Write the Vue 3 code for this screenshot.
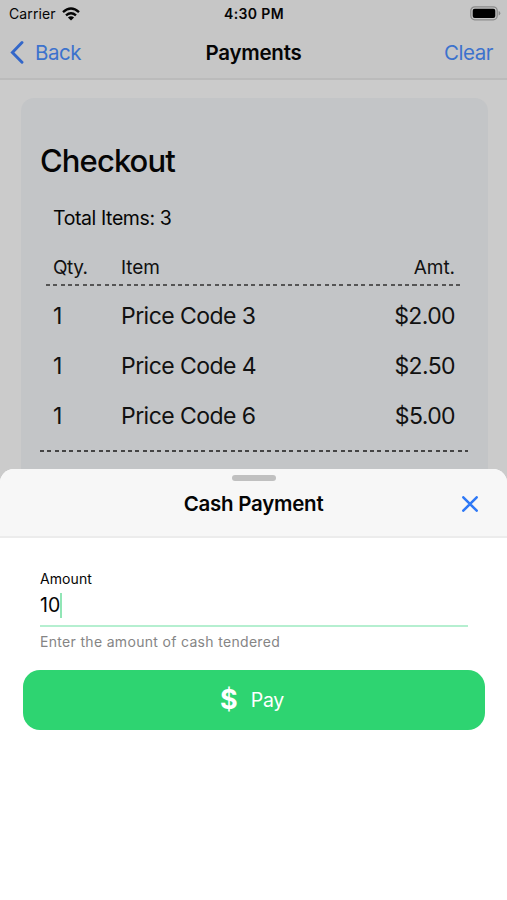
<script setup>
const items = [
  { qty: 1, name: 'Price Code 3', amount: '$2.00' },
  { qty: 1, name: 'Price Code 4', amount: '$2.50' },
  { qty: 1, name: 'Price Code 6', amount: '$5.00' },
]
const cash = '10'
</script>

<template>
  <div class="screen">
    <div class="page">
      <header class="top">
        <div class="status">
          <div class="carrier">
            <span class="carrier-name">Carrier</span>
            <svg class="wifi" viewBox="0 0 18 14" width="18" height="14">
              <path d="M1 5.1Q9-1.9 17 5.1M4 8.4Q9 4.1 14 8.4" fill="none" stroke="#050505" stroke-width="2.4" />
              <path d="M5.9 10.5Q9 8 12.1 10.5L9 13.6Z" fill="#050505" />
            </svg>
          </div>
          <span class="time">4:30 PM</span>
          <svg class="battery" viewBox="0 0 31 15" width="31" height="15">
            <rect x="0.8" y="0.8" width="26.4" height="13" rx="4" fill="none" stroke="#8b8b8b" stroke-width="1.3" />
            <rect x="2.7" y="2.7" width="22.6" height="9.2" rx="2" fill="#000" />
            <path d="M28.6 5Q30.3 5.6 30.3 7.3T28.6 9.6Z" fill="#8b8b8b" />
          </svg>
        </div>
        <nav class="nav">
          <a class="back">
            <svg viewBox="0 0 14 23" width="14" height="23">
              <path d="M12 1.6L2.4 11.4L12 21.2" fill="none" stroke="#3367c9" stroke-width="2.9" stroke-linecap="round" stroke-linejoin="miter" />
            </svg>
            <span>Back</span>
          </a>
          <span class="title">Payments</span>
          <a class="clear">Clear</a>
        </nav>
      </header>
      <main class="card">
        <h1>Checkout</h1>
        <p class="total">Total Items: 3</p>
        <div class="row head">
          <span class="qty">Qty.</span><span>Item</span><span class="amt">Amt.</span>
        </div>
        <div class="dash inset"></div>
        <div class="rows">
          <div v-for="item in items" :key="item.name" class="row">
            <span>{{ item.qty }}</span><span>{{ item.name }}</span><span class="amt">{{ item.amount }}</span>
          </div>
        </div>
        <div class="dash"></div>
      </main>
    </div>
    <section class="sheet">
      <header class="sheet-head">
        <div class="handle"></div>
        <div class="sheet-bar">
          <h2>Cash Payment</h2>
          <svg class="close" viewBox="0 0 16 16" width="16" height="16">
            <path d="M1.3 1.3L14.7 14.7M14.7 1.3L1.3 14.7" stroke="#2f79f6" stroke-width="2.5" stroke-linecap="round" />
          </svg>
        </div>
      </header>
      <div class="form">
        <label>Amount</label>
        <div class="input"><span>{{ cash }}</span><i class="caret"></i></div>
        <p class="hint">Enter the amount of cash tendered</p>
      </div>
      <button class="pay"><span class="dollar">$</span><span class="pay-label">Pay</span></button>
    </section>
  </div>
</template>

<style>
body { background: #fff; }
</style>

<style scoped>
* { box-sizing: border-box; margin: 0; }
.screen { position: relative; width: 507px; height: 900px; overflow: hidden; font-family: Inter, "Liberation Sans", sans-serif; color: #050505; }
.page { height: 520px; background: #cbcbcb; }
.top { height: 80px; background: #c6c6c6; border-bottom: 2px solid #bbb; }
.status { display: grid; grid-template-columns: 1fr auto 1fr; align-items: center; height: 27px; padding: 0 6px 0 9px; }
.carrier { display: flex; align-items: center; gap: 6px; }
.carrier-name { font-size: 14px; line-height: 27px; letter-spacing: 0.1px; }
.time { margin-right: 2px; font-size: 14px; font-weight: 600; letter-spacing: 0.35px; }
.battery { justify-self: end; }
.nav { display: grid; grid-template-columns: 1fr auto 1fr; align-items: center; height: 50px; padding: 0 14px 0 10px; font-size: 20.5px; letter-spacing: -0.45px; color: #3c72cd; }
.back { display: flex; align-items: center; gap: 11px; }
.title { margin-left: 4px; font-weight: 600; font-size: 20.5px; letter-spacing: -0.25px; color: #050505; }
.clear { justify-self: end; }
.card { height: 440px; margin: 18px 19px 0 21px; padding: 44px 20px 0 19px; border-radius: 13px; background: #c3c5c7; }
h1 { font-size: 31px; font-weight: 500; line-height: 38px; letter-spacing: -0.9px; }
.total { margin: 25px 0 0 13px; font-size: 19.5px; line-height: 26px; letter-spacing: -0.4px; }
.row { display: grid; grid-template-columns: 68px 1fr auto; padding: 0 13px; height: 50px; align-items: center; font-size: 23px; letter-spacing: -0.55px; color: #111; }
.row.head { height: 26px; margin-top: 23px; font-size: 19px; letter-spacing: -0.05px; }
.row.head .qty { letter-spacing: -0.45px; }
.rows { padding-top: 5px; }
.rows .amt { letter-spacing: -0.6px; }
.dash { height: 2px; background: repeating-linear-gradient(90deg, #444 0 4px, transparent 4px 7.33px); }
.dash.inset { margin: 4px 6px 0; background: repeating-linear-gradient(90deg, #555 0 4px, transparent 4px 7.33px); }
.rows + .dash { margin-top: 9px; }
.sheet { position: absolute; left: 0; top: 469px; width: 507px; height: 431px; background: #fff; border-radius: 14px 14px 0 0; overflow: hidden; }
.sheet-head { height: 69px; padding-top: 6px; background: #f7f7f7; border-bottom: 2px solid #ececec; }
.handle { width: 44px; height: 6px; margin: 0 auto; border-radius: 3px; background: #c0c0c0; }
.sheet-bar { display: grid; grid-template-columns: 1fr auto 1fr; align-items: center; height: 45px; padding: 0 29px; }
h2 { grid-column: 2; font-size: 20.5px; font-weight: 600; letter-spacing: -0.25px; }
.close { justify-self: end; }
.form { padding: 30px 39px 0 40px; }
label { display: block; font-size: 14px; line-height: 22px; letter-spacing: 0.1px; }
.input { display: flex; align-items: center; height: 37px; padding-bottom: 5px; border-bottom: 2px solid #b5efd0; font-size: 19.5px; }
.caret { width: 2px; height: 25px; background: #91e6b6; }
.hint { margin-top: 4px; font-size: 14px; line-height: 22px; letter-spacing: 0.32px; color: #858585; }
.pay { display: flex; align-items: center; justify-content: center; gap: 13px; width: 462px; height: 60px; margin: 17px 0 0 23px; padding: 0 4px 0 0; border: 0; border-radius: 17px; background: #2ed471; color: #fff; font-family: inherit; }
.dollar { font-size: 27px; font-weight: 700; line-height: 60px; }
.pay-label { font-size: 19.5px; letter-spacing: -0.3px; }
</style>
